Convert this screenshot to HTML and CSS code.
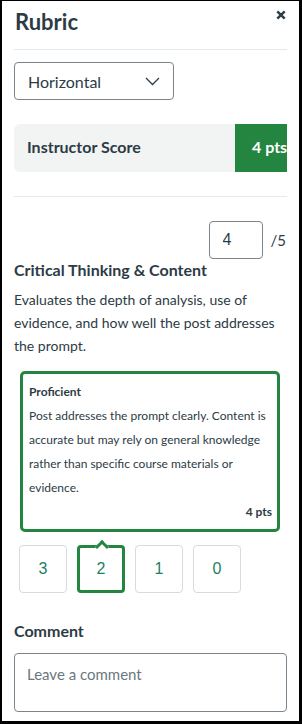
FILE: index.html
```html
<!DOCTYPE html>
<html lang="en">
<head>
<meta charset="utf-8">
<title>Rubric</title>
<link rel="stylesheet" href="styles.css">
</head>
<body>
<div class="frame">
  <div class="panel">
    <header class="header">
      <h1 class="title">Rubric</h1>
      <button class="close" aria-label="Close">
        <svg width="10" height="10" viewBox="0 0 10 10"><path d="M1.3 1.3 L8.7 8.7 M8.7 1.3 L1.3 8.7" stroke="#2d3b45" stroke-width="2.4" fill="none"/></svg>
      </button>
    </header>

    <div class="select">
      <span>Horizontal</span>
      <svg class="chev" width="15" height="9" viewBox="0 0 15 9"><polyline points="1,1 7.5,7.5 14,1" fill="none" stroke="#2d3b45" stroke-width="1.3"/></svg>
    </div>

    <div class="score-bar">
      <div class="score-label">Instructor Score</div>
      <div class="score-value">4 pts</div>
    </div>

    <div class="divider"></div>

    <div class="points-row">
      <input class="points-input" type="text" value="4">
      <span class="points-max">/5</span>
    </div>

    <h2 class="crit-title">Critical Thinking &amp; Content</h2>
    <p class="crit-desc">Evaluates the depth of analysis, use of evidence, and how well the post addresses the prompt.</p>

    <div class="rating-card">
      <div class="rating-name">Proficient</div>
      <div class="rating-desc">Post addresses the prompt clearly. Content is accurate but may rely on general knowledge rather than specific course materials or evidence.</div>
      <div class="rating-pts">4 pts</div>
    </div>

    <div class="rating-buttons">
      <button class="rate">3</button>
      <button class="rate selected">2</button>
      <button class="rate">1</button>
      <button class="rate">0</button>
    </div>

    <h2 class="comment-title">Comment</h2>
    <textarea class="comment" placeholder="Leave a comment"></textarea>
  </div>
</div>
</body>
</html>
```
FILE: styles.css
```css
* { box-sizing: border-box; }
html, body { margin: 0; padding: 0; background: #fff; }
body { font-family: "Lato", "Liberation Sans", sans-serif; color: #2d3b45; }

.frame {
  width: 302px;
  height: 724px;
  border-style: solid;
  border-color: #000;
  border-width: 1px 3px 3px 2px;
  overflow: hidden;
  background: #fff;
}
.panel { padding: 8px 12px 0 12px; }

.header {
  display: flex;
  justify-content: space-between;
  align-items: flex-start;
  padding-bottom: 14px;
  border-bottom: 1px solid #e6e9eb;
}
.title { margin: 0; font-size: 22px; line-height: 26px; font-weight: 700; padding-left: 1px; }
.close {
  border: 0; background: none; padding: 0; margin: 1px 1px 0 0;
  width: 10px; height: 10px; display: flex;
}

.select {
  margin-top: 12px;
  width: 160px;
  height: 38px;
  border: 1px solid #7b858d;
  border-radius: 4px;
  display: flex;
  align-items: center;
  justify-content: space-between;
  padding: 0 13px 0 13px;
  font-size: 16px;
}
.chev { margin-top: 1px; }

.score-bar {
  margin-top: 24px;
  height: 48px;
  display: flex;
  background: #f2f4f4;
  border-radius: 6px 0 0 6px;
  overflow: hidden;
}
.score-label {
  flex: 0 0 221px;
  display: flex;
  align-items: center;
  padding: 0 0 3px 13px;
  font-weight: 700;
  font-size: 16px;
}
.score-value {
  flex: 0 0 70px;
  background: #238540;
  color: #fff;
  font-weight: 700;
  font-size: 16px;
  display: flex;
  align-items: center;
  padding: 0 0 3px 17px;
}

.divider { margin-top: 24px; height: 1px; background: #e6e9eb; }

.points-row {
  margin-top: 24px;
  display: flex;
  justify-content: flex-end;
  align-items: center;
  gap: 8px;
  padding-right: 1px;
}
.points-input {
  width: 54px;
  height: 38px;
  border: 1px solid #7b858d;
  border-radius: 4px;
  padding: 0 0 0 13px;
  font-family: "Liberation Sans", sans-serif;
  font-size: 16px;
  color: #2d3b45;
  margin: 0;
}
.points-max { font-size: 15px; }

.crit-title { margin: 1px 0 0 0; font-size: 16px; line-height: 20px; font-weight: 700; }
.crit-desc { margin: 8px 0 0 0; font-size: 14px; line-height: 23px; }

.rating-card {
  margin: 14px 7px 0 6px;
  border: 3px solid #238540;
  border-radius: 5px;
  padding: 6px 5px 5px 6px;
  font-size: 12px;
  line-height: 24px;
}
.rating-name { font-weight: 700; }
.rating-pts { text-align: right; font-weight: 700; }

.rating-buttons {
  margin-top: 13px;
  padding-left: 5px;
  display: flex;
  gap: 10px;
}
.rate {
  position: relative;
  width: 48px;
  height: 48px;
  border: 1px solid #d7dbde;
  border-radius: 4px;
  background: #fff;
  font-family: "Liberation Sans", sans-serif;
  font-size: 16px;
  color: #1d7f5f;
  padding: 0;
}
.rate.selected { border: 3px solid #238540; }
.rate.selected::before {
  content: "";
  position: absolute;
  top: -6px;
  left: 50%;
  width: 7px;
  height: 7px;
  margin-left: -4.5px;
  background: #fff;
  border-top: 3px solid #238540;
  border-left: 3px solid #238540;
  transform: rotate(45deg);
}

.comment-title { margin: 28px 0 0 0; font-size: 16px; line-height: 20px; font-weight: 700; }
.comment {
  display: block;
  margin-top: 12px;
  width: 273px;
  height: 59px;
  border: 1px solid #7b858d;
  border-radius: 4px;
  padding: 10px 12px 4px 12px;
  font-family: "Lato", sans-serif;
  font-size: 15px;
  line-height: 20px;
  resize: none;
  color: #2d3b45;
}
.comment::placeholder { color: #6b7780; }
```
